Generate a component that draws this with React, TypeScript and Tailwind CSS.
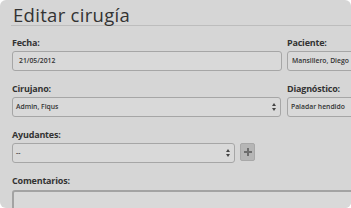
import React from "react";

const font = { fontFamily: '"Open Sans", "Noto Sans", sans-serif' };

function Arrows() {
  return (
    <svg width="4" height="8" viewBox="0 0 4 8" className="shrink-0">
      <path d="M2 0 L4 3 L0 3 Z" fill="#444" />
      <path d="M2 8 L4 5 L0 5 Z" fill="#444" />
    </svg>
  );
}

function Label({ children }: { children: React.ReactNode }) {
  return (
    <div className="h-[12px] text-[9px] leading-[12px] font-bold text-[#333] tracking-[-0.2px] whitespace-nowrap">
      {children}
    </div>
  );
}

function Input({ value, w, pl = "pl-[6px]" }: { value: string; w: string; pl?: string }) {
  return (
    <div
      className={`${w} h-[20px] mt-[2.5px] border border-[#a6a6a6] rounded-[3px] bg-[#d9d9d9] flex items-center ${pl} text-[6.8px] font-semibold text-[#333] whitespace-nowrap overflow-hidden`}
    >
      {value}
    </div>
  );
}

function Select({ value, w, arrows = true }: { value: string; w: string; arrows?: boolean }) {
  return (
    <div
      className={`${w} h-[20px] mt-[2.5px] border border-[#a6a6a6] rounded-[3px] bg-[#d9d9d9] flex items-center justify-between pl-[3px] pr-[4px] text-[6.8px] font-semibold text-[#333] whitespace-nowrap overflow-hidden`}
    >
      <span>{value}</span>
      {arrows && <Arrows />}
    </div>
  );
}

export default function App() {
  return (
    <div className="w-[351px] h-[208px] bg-white" style={font}>
      <div className="w-full h-full rounded-[6px] bg-[#d6d6d6] overflow-hidden pl-[11px] pt-[4.6px]">
        <div className="border-b border-[#bdbdbd] pl-[2px] h-[21.8px]">
          <h1 className="text-[18.5px] leading-[20px] font-normal text-[#333] tracking-[0.3px]">Editar cirugía</h1>
        </div>
        <div className="pl-[1px] pt-[10.5px] w-[400px]">
          <div className="flex gap-[5px] mb-[11.5px]">
            <div className="w-[270px]">
              <Label>Fecha:</Label>
              <Input value="21/05/2012" w="w-[270px]" />
            </div>
            <div className="w-[120px]">
              <Label>Paciente:</Label>
              <Input value="Mansillero, Diego" w="w-[120px]" pl="pl-[4px]" />
            </div>
          </div>
          <div className="flex gap-[5px] mb-[11.5px]">
            <div className="w-[270px]">
              <Label>Cirujano:</Label>
              <Select value="Admin, Fiqus" w="w-[269px]" />
            </div>
            <div className="w-[120px]">
              <Label>Diagnóstico:</Label>
              <Select value="Paladar hendido" w="w-[120px]" arrows={false} />
            </div>
          </div>
          <div className="mb-[11.5px]">
            <Label>Ayudantes:</Label>
            <div className="flex gap-[5px] items-start">
              <Select value="--" w="w-[223px]" />
              <div className="mt-[2.5px] w-[15px] h-[18px] bg-[#b6b6b6] border border-[#a8a8a8] rounded-[2px] flex items-center justify-center">
                <svg width="8" height="8" viewBox="0 0 8 8">
                  <rect x="3" y="0" width="2" height="8" fill="#6e6e6e" />
                  <rect x="0" y="3" width="8" height="2" fill="#6e6e6e" />
                </svg>
              </div>
            </div>
          </div>
          <div>
            <Label>Comentarios:</Label>
            <div className="mt-[3px] w-[390px] h-[40px] border-2 border-[#a3a3a3] rounded-[3px] bg-[#d9d9d9]" />
          </div>
        </div>
      </div>
    </div>
  );
}
